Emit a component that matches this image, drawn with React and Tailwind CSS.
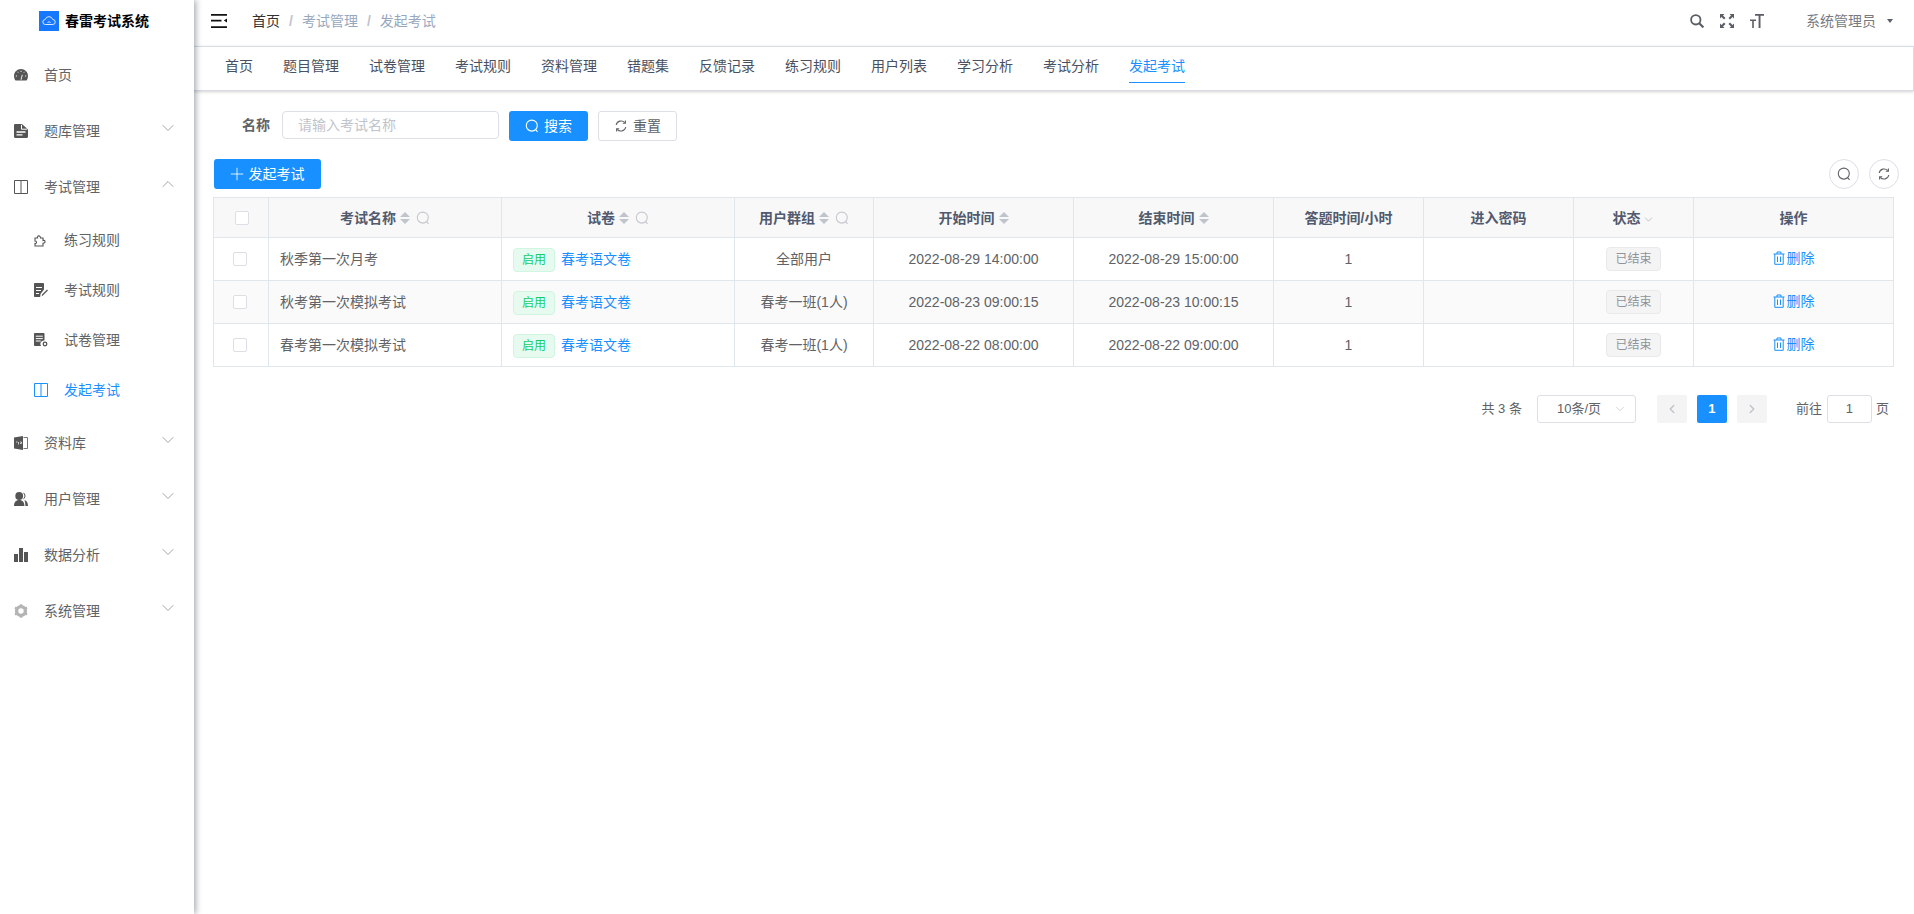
import { ChevronDown, ChevronUp, ChevronLeft, ChevronRight, Plus } from 'lucide-react';

function SearchThin({ className }) {
    return (
        <svg viewBox="0 0 14 14" fill="none" stroke="currentColor" strokeWidth="1.1" className={className}>
            <circle cx="6.8" cy="6.6" r="5.5" />
            <path d="M10.6 10.6L12.6 12.8" />
        </svg>
    );
}

function RefreshThin({ className }) {
    return (
        <svg viewBox="0 0 14 14" fill="none" stroke="currentColor" strokeWidth="1.1" className={className}>
            <path d="M2.2 6a5 5 0 0 1 8.6-2.4" />
            <path d="M11.8 8a5 5 0 0 1-8.6 2.4" />
            <path d="M11.4 1.6v2.6H8.8" />
            <path d="M2.6 12.4V9.8h2.6" />
        </svg>
    );
}

function TrashIcon({ className }) {
    return (
        <svg viewBox="0 0 12 14" fill="none" stroke="currentColor" strokeWidth="1" className={className}>
            <path d="M0.5 3h11M4 3V1h4v2M1.8 3v10.300h8.400V3M4.500 5.500v5.500M7.500 5.500v5.500" />
        </svg>
    );
}

function BookIcon({ className }) {
    return (
        <svg viewBox="0 0 14 14" fill="none" stroke="currentColor" strokeWidth="1" className={className}>
            <path d="M0.500 0.500h13v13h-13z" />
            <path d="M7 1v12" strokeWidth="2" strokeOpacity="0.5" />
        </svg>
    );
}

const icons = {
    dashboard: (
        <svg viewBox="0 0 14 14" className="h-[14px] w-[14px]" fill="currentColor">
            <path d="M7 1C3.100 1 0 4.100 0 8c0 1.500.4 2.800 1 3.900.2.300.4.500.7.500h10.600c.3 0 .5-.2.700-.5.600-1.100 1-2.400 1-3.900 0-3.900-3.100-7-7-7z" />
            <path d="M3.400 3.800l.7.800M7 2.800v1.200M10.600 3.800l-.7.800M1.800 8h1.200M11 8h1.200M7 11.800l1.300-5" stroke="#fff" strokeWidth="0.900" />
        </svg>
    ),
    file: (
        <svg viewBox="0 0 14 14" className="h-[14px] w-[14px]" fill="currentColor">
            <path d="M1.200 0H8l6 5.500v7.300c0 .7-.5 1.200-1.200 1.200H1.200C.5 14 0 13.500 0 12.800V1.200C0 .5.500 0 1.200 0z" />
            <path d="M7.500.8v4.400h5.600" fill="none" stroke="#fff" strokeWidth="1" />
            <path d="M2.500 8h9M2.500 10.800h6" stroke="#fff" strokeWidth="1.300" />
        </svg>
    ),
    puzzle: (
        <svg viewBox="0 0 14 14" className="h-[14px] w-[14px]" fill="none" stroke="currentColor" strokeWidth="1.100">
            <path d="M1 5h2.500c-.8-2.500 3-3.200 3 0H9v2.500c2.300-.7 3.200 2.500 0 2.800V13H1v-2.500c1.800.6 2.200-3 0-2.500z" />
        </svg>
    ),
    docEdit: (
        <svg viewBox="0 0 14 14" className="h-[14px] w-[14px]" fill="currentColor">
            <path d="M1 0h8c.6 0 1 .4 1 1v5.500L6.500 11l-.3 3H1c-.6 0-1-.4-1-1V1c0-.6.4-1 1-1z" />
            <path d="M2 4.500h6M2 7.500h5M2 10.500h3" stroke="#fff" strokeWidth="1.100" />
            <path d="M8 12.500l5.500-5.500" stroke="currentColor" strokeWidth="1.300" />
        </svg>
    ),
    docGear: (
        <svg viewBox="0 0 14 14" className="h-[14px] w-[14px]" fill="currentColor">
            <path d="M1 0h8.500c.6 0 1 .4 1 1v6.500a3.500 3.500 0 0 0-3.500 5.500H1c-.6 0-1-.4-1-1V1c0-.6.4-1 1-1z" />
            <path d="M1.800 3.200h7M1.800 5.600h7M1.800 8h5" stroke="#fff" strokeWidth="1" />
            <circle cx="11" cy="11" r="1.800" fill="none" stroke="currentColor" strokeWidth="1.300" />
        </svg>
    ),
    zip: (
        <svg viewBox="0 0 14 14" className="h-[14px] w-[14px]">
            <path d="M0 1.500L9 0v14L0 12.500z" fill="currentColor" />
            <path d="M9.500 1.500h4v11h-4" fill="none" stroke="currentColor" strokeWidth="0.800" />
            <path d="M2 6h1.500M4.500 6v2.500M6 6h1.500v1.500H6M11 5v1M11 7v1" stroke="#fff" strokeWidth="0.700" fill="none" />
        </svg>
    ),
    users: (
        <svg viewBox="0 0 14 14" className="h-[14px] w-[14px]" fill="currentColor">
            <circle cx="5.200" cy="4" r="3.900" />
            <path d="M0 14c0-3.800 1.800-6 5.200-6s5.200 2.200 5.200 6z" />
            <path d="M9.200.5a3.800 3.800 0 0 1 0 7c-.3 0-.2-.3 0-.5a4.600 4.600 0 0 0 0-6c-.2-.2-.3-.5 0-.5zM10.400 8c2.300.5 3.600 2.700 3.600 6h-2.600c0-2.400-.3-4.200-1-6z" />
        </svg>
    ),
    chart: (
        <svg viewBox="0 0 14 14" className="h-[14px] w-[14px]" fill="currentColor">
            <path d="M0 6h4v8H0zM5 0h4v14H5zM10 4h4v10h-4z" />
        </svg>
    ),
    gear: (
        <svg viewBox="0 0 14 14" className="h-[14px] w-[14px] text-[#b4b4b4]" fill="none" stroke="currentColor">
            <circle cx="7" cy="7" r="4.400" strokeWidth="3.400" />
            <path d="M7 .2v2M7 11.800v2M1 3.500l1.700 1M11.300 9.500l1.700 1M1 10.500l1.700-1M11.300 4.500l1.700-1" strokeWidth="2.400" />
        </svg>
    ),
};

const bookIcon = <BookIcon className="h-[14px] w-[14px]" />;

const menu = [
    { label: '首页', icon: icons.dashboard },
    { label: '题库管理', icon: icons.file, arrow: 'down' },
    { label: '考试管理', icon: bookIcon, arrow: 'up' },
    { label: '练习规则', icon: icons.puzzle, sub: true },
    { label: '考试规则', icon: icons.docEdit, sub: true },
    { label: '试卷管理', icon: icons.docGear, sub: true },
    { label: '发起考试', icon: bookIcon, sub: true, active: true },
    { label: '资料库', icon: icons.zip, arrow: 'down' },
    { label: '用户管理', icon: icons.users, arrow: 'down' },
    { label: '数据分析', icon: icons.chart, arrow: 'down' },
    { label: '系统管理', icon: icons.gear, arrow: 'down' },
];

const tabs = ['首页', '题目管理', '试卷管理', '考试规则', '资料管理', '错题集', '反馈记录', '练习规则', '用户列表', '学习分析', '考试分析', '发起考试'];

const rows = [
    { name: '秋季第一次月考', group: '全部用户', start: '2022-08-29 14:00:00', end: '2022-08-29 15:00:00' },
    { name: '秋考第一次模拟考试', group: '春考一班(1人)', start: '2022-08-23 09:00:15', end: '2022-08-23 10:00:15' },
    { name: '春考第一次模拟考试', group: '春考一班(1人)', start: '2022-08-22 08:00:00', end: '2022-08-22 09:00:00' },
];

function Sidebar() {
    return (
        <aside className="relative z-10 flex w-[194px] shrink-0 flex-col bg-white shadow-[2px_0_6px_rgba(0,21,41,0.35)]">
            <div className="flex h-[47px] shrink-0 items-start pl-[39px] pt-[11px]">
                <div className="flex h-5 w-5 items-center justify-center bg-[#1677ff]">
                    <svg viewBox="0 0 14 14" className="h-[14px] w-[14px]" fill="none" stroke="#dbeafe" strokeWidth="1">
                        <path d="M3.500 10.500a2.500 2.500 0 0 1-.3-5 3.900 3.900 0 0 1 7.500 0 2.500 2.500 0 0 1 .1 5z" />
                        <path d="M5.500 9l1.500-1.500L8.500 9" />
                    </svg>
                </div>
                <span className="ml-[6px] text-sm font-bold leading-5 text-black">春雷考试系统</span>
            </div>
            {menu.map((item) => (
                <div
                    key={item.label}
                    className={`flex items-center text-sm ${item.sub ? 'h-[50px] pl-[34px]' : 'h-14 pl-[14px]'} ${item.active ? 'text-[#1890ff]' : 'text-[#555555]'}`}
                >
                    <span className="flex w-[14px] justify-center">{item.icon}</span>
                    <span className={`ml-4 ${item.active ? 'text-[#1890ff]' : 'text-[#606266]'}`}>{item.label}</span>
                    {item.arrow === 'down' && <ChevronDown className="absolute left-[158px] -mt-[6px] h-5 w-5 text-[#909399]" strokeWidth={1} />}
                    {item.arrow === 'up' && <ChevronUp className="absolute left-[158px] -mt-[6px] h-5 w-5 text-[#909399]" strokeWidth={1} />}
                </div>
            ))}
        </aside>
    );
}

function TopBar() {
    return (
        <div className="flex h-[46px] shrink-0 items-center pl-[17px] pr-[21px]">
            <svg viewBox="0 0 16 14" className="h-[14px] w-4 -translate-y-[2px] text-[#111111]" fill="currentColor">
                <path d="M0 0h16v1.700H0zM0 5.800h10.500v1.700H0zM0 12.300h16V14H0zM16 4.600v4L12.800 6.600z" />
            </svg>
            <div className="ml-[25px] flex -translate-y-[2px] items-center text-sm">
                <span className="text-[#303133]">首页</span>
                <span className="mx-[9px] font-bold text-[#c0c4cc]">/</span>
                <span className="text-[#97a8be]">考试管理</span>
                <span className="mx-[9px] font-bold text-[#c0c4cc]">/</span>
                <span className="text-[#97a8be]">发起考试</span>
            </div>
            <div className="ml-auto flex -translate-y-[2px] items-center text-[#5a5e66]">
                <svg viewBox="0 0 14 14" className="h-[14px] w-[14px]" fill="none" stroke="currentColor" strokeWidth="1.800">
                    <circle cx="5.800" cy="5.800" r="4.700" />
                    <path d="M9.200 9.200L13.400 13.400" strokeWidth="2.200" />
                </svg>
                <svg viewBox="0 0 14 14" className="ml-4 h-[14px] w-[14px]" fill="currentColor">
                    <path d="M0 0h4.500L3 1.500l2.500 2.500-1.500 1.500L1.500 3 0 4.500zM14 0v4.500L12.500 3 10 5.500 8.500 4 11 1.500 9.500 0zM0 14V9.500L1.500 11 4 8.500 5.500 10 3 12.500 4.500 14zM14 14H9.500l1.500-1.500L8.500 10 10 8.500l2.500 2.500 1.500-1.500z" />
                </svg>
                <svg viewBox="0 0 14 14" className="ml-4 h-[14px] w-[14px]" fill="currentColor">
                    <path d="M5 0h9v1.800h-3.500V14H8.600V1.800H5zM0 5.500h6v1.500H3.800v7H2.200V7H0z" />
                </svg>
                <span className="ml-[42px] text-sm text-[#777a80]">系统管理员</span>
                <span className="ml-[11px] h-0 w-0 border-x-[3.500px] border-t-[4px] border-x-transparent border-t-[#5a5e66]" />
            </div>
        </div>
    );
}

function TabBar() {
    return (
        <div className="flex h-[45px] shrink-0 items-start border-y border-r border-[#d8dce5] pl-[16px] shadow-[0_1px_3px_rgba(0,0,0,0.18)]">
            {tabs.map((tab) => (
                <div key={tab} className="px-[15px] pt-[9px] text-sm leading-5">
                    <span className={`inline-block pb-[6px] ${tab === '发起考试' ? 'border-b border-[#1890ff] text-[#1890ff]' : 'text-[#495060]'}`}>{tab}</span>
                </div>
            ))}
        </div>
    );
}

function SortCaret() {
    return (
        <span className="ml-1 inline-flex flex-col gap-[2px] align-middle">
            <span className="h-0 w-0 border-x-[5px] border-b-[5px] border-x-transparent border-b-[#c0c4cc]" />
            <span className="h-0 w-0 border-x-[5px] border-t-[5px] border-x-transparent border-t-[#c0c4cc]" />
        </span>
    );
}

function HeadCell({ children, sort, search }) {
    return (
        <th className="h-10 border border-[#dfe6ec] bg-[#f8f8f9] px-[10px] text-sm font-bold text-[#515a6e]">
            <span className="inline-flex items-center justify-center">
                {children}
                {sort && <SortCaret />}
                {search && <SearchThin className="ml-[6px] h-[14px] w-[14px] text-[#c5c8ce]" />}
            </span>
        </th>
    );
}

function Checkbox() {
    return <span className="block h-[14px] w-[14px] rounded-[2px] border border-[#dcdfe6] bg-white" />;
}

function ExamTable() {
    const cell = 'h-[43px] border border-[#dfe6ec] px-[10px] text-sm text-[#606266]';
    return (
        <table className="-ml-px w-[1680px] table-fixed">
            <colgroup>
                <col className="w-[55px]" />
                <col className="w-[233px]" />
                <col className="w-[233px]" />
                <col className="w-[139px]" />
                <col className="w-[200px]" />
                <col className="w-[200px]" />
                <col className="w-[150px]" />
                <col className="w-[150px]" />
                <col className="w-[120px]" />
                <col className="w-[200px]" />
            </colgroup>
            <thead>
                <tr>
                    <th className="h-10 border border-[#dfe6ec] bg-[#f8f8f9] pl-[21px]"><Checkbox /></th>
                    <HeadCell sort search>考试名称</HeadCell>
                    <HeadCell sort search>试卷</HeadCell>
                    <HeadCell sort search>用户群组</HeadCell>
                    <HeadCell sort>开始时间</HeadCell>
                    <HeadCell sort>结束时间</HeadCell>
                    <HeadCell>答题时间/小时</HeadCell>
                    <HeadCell>进入密码</HeadCell>
                    <HeadCell>
                        状态
                        <ChevronDown className="ml-[1px] mt-[3px] h-[13px] w-[13px] text-[#909399]" strokeWidth={1} />
                    </HeadCell>
                    <HeadCell>操作</HeadCell>
                </tr>
            </thead>
            <tbody>
                {rows.map((row, i) => (
                    <tr key={row.name} className={i % 2 === 1 ? 'bg-[#fafafa]' : 'bg-white'}>
                        <td className="h-[43px] border border-[#dfe6ec] pl-[19px]"><Checkbox /></td>
                        <td className={`${cell} pl-[11px]`}>{row.name}</td>
                        <td className={`${cell} pl-[11px]`}>
                            <div className="flex items-center">
                                <span className="h-6 translate-y-px rounded-[4px] border border-[#d0f5e0] bg-[#e7faf0] px-2 text-xs leading-[22px] text-[#13ce66]">启用</span>
                                <span className="ml-[6px] text-[#1890ff]">春考语文卷</span>
                            </div>
                        </td>
                        <td className={`${cell} text-center`}>{row.group}</td>
                        <td className={`${cell} text-center`}>{row.start}</td>
                        <td className={`${cell} text-center`}>{row.end}</td>
                        <td className={`${cell} text-center`}>1</td>
                        <td className={cell}></td>
                        <td className={`${cell} text-center`}>
                            <span className="inline-block h-6 rounded-[4px] border border-[#e9e9eb] bg-[#f4f4f5] px-2 text-xs leading-[22px] text-[#909399]">已结束</span>
                        </td>
                        <td className={`${cell} text-center`}>
                            <span className="inline-flex items-center text-[#1890ff]">
                                <TrashIcon className="mr-[2px] h-[14px] w-3" />
                                删除
                            </span>
                        </td>
                    </tr>
                ))}
            </tbody>
        </table>
    );
}

function Pagination() {
    return (
        <div className="mt-7 flex items-center justify-end pr-[5px] text-[13px] text-[#606266]">
            <span>共 3 条</span>
            <div className="ml-[15px] flex h-[28px] w-[99px] items-center rounded-[3px] border border-[#dcdfe6] pl-[19px] pr-2">
                <span>10条/页</span>
                <ChevronDown className="ml-auto h-[14px] w-[14px] text-[#c0c4cc]" strokeWidth={1.2} />
            </div>
            <span className="ml-[21px] flex h-7 w-[30px] items-center justify-center rounded-[2px] bg-[#f4f4f5] text-[#c0c4cc]">
                <ChevronLeft className="h-[14px] w-[14px]" strokeWidth={2.500} />
            </span>
            <span className="ml-[10px] flex h-7 w-[30px] items-center justify-center rounded-[2px] bg-[#1890ff] font-bold text-white">1</span>
            <span className="ml-[10px] flex h-7 w-[30px] items-center justify-center rounded-[2px] bg-[#f4f4f5] text-[#c0c4cc]">
                <ChevronRight className="h-[14px] w-[14px]" strokeWidth={2.500} />
            </span>
            <span className="ml-[29px]">前往</span>
            <span className="ml-[5px] flex h-7 w-[45px] items-center justify-center rounded-[3px] border border-[#dcdfe6]">1</span>
            <span className="ml-[4px]">页</span>
        </div>
    );
}

function App() {
    return (
        <div className="flex h-[914px] w-[1914px] overflow-hidden bg-white [font-family:'Liberation_Sans','Noto_Sans_CJK_SC',sans-serif]">
            <Sidebar />
            <main className="flex min-w-0 flex-1 flex-col">
                <TopBar />
                <TabBar />
                <div className="pl-5 pr-5 pt-[20px]">
                    <div className="flex items-start">
                        <span className="w-14 text-right text-sm font-bold leading-7 text-[#606266]">名称</span>
                        <div className="ml-3 flex h-[28px] w-[217px] items-center rounded-[4px] border border-[#dcdfe6] pl-[15px] text-sm text-[#c0c4cc]">请输入考试名称</div>
                        <button className="ml-[10px] flex h-[30px] w-[79px] items-center justify-center rounded-[3px] bg-[#1890ff] text-sm text-white">
                            <SearchThin className="mr-[5px] h-[14px] w-[14px]" />
                            搜索
                        </button>
                        <button className="ml-[10px] flex h-[30px] w-[79px] items-center justify-center rounded-[3px] border border-[#dcdfe6] text-sm text-[#606266]">
                            <RefreshThin className="mr-[5px] h-[14px] w-[14px]" />
                            重置
                        </button>
                    </div>
                    <div className="mb-2 mt-[18px] flex items-center">
                        <button className="flex h-[30px] w-[107px] items-center justify-center rounded-[3px] bg-[#1890ff] text-[14px] text-white">
                            <Plus className="-ml-[4px] mr-[2px] h-5 w-5" strokeWidth={1} />
                            发起考试
                        </button>
                        <div className="-mr-[5px] ml-auto flex gap-[10px]">
                            <span className="flex h-[30px] w-[30px] items-center justify-center rounded-full border border-[#dcdfe6] text-[#606266]"><SearchThin className="h-[14px] w-[14px]" /></span>
                            <span className="flex h-[30px] w-[30px] items-center justify-center rounded-full border border-[#dcdfe6] text-[#606266]"><RefreshThin className="h-[14px] w-[14px]" /></span>
                        </div>
                    </div>
                    <ExamTable />
                    <Pagination />
                </div>
            </main>
        </div>
    );
}

export default App;
